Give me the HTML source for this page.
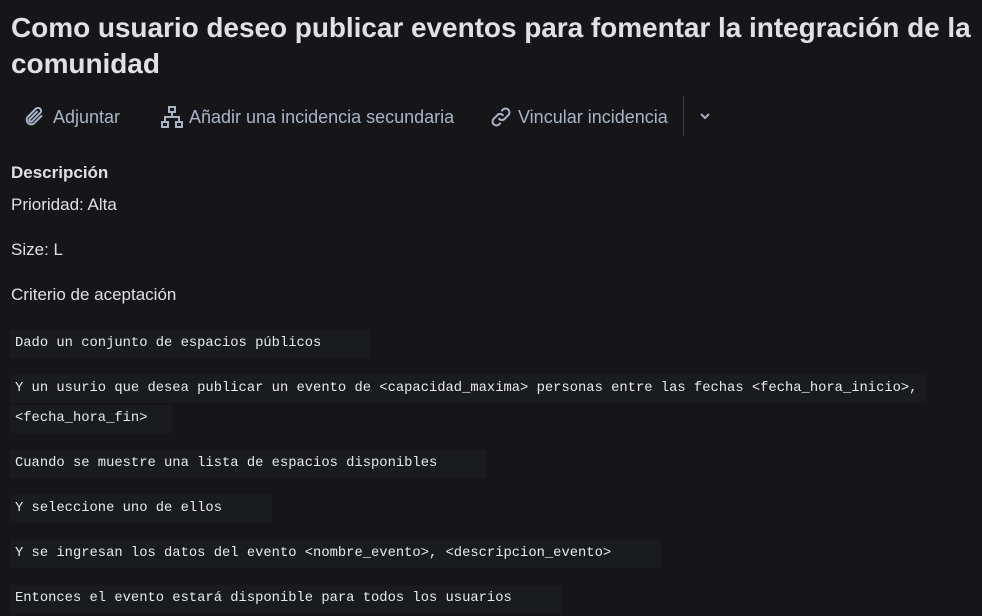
<!DOCTYPE html>
<html><head><meta charset="utf-8"><style>
html,body{margin:0;padding:0;background:#161618;width:982px;height:616px;overflow:hidden;font-family:"Liberation Sans",sans-serif;color:#dee0e4}
.a{position:absolute;white-space:nowrap}
h1{position:absolute;left:11px;top:10px;margin:0;font-size:28px;font-weight:bold;line-height:36px;color:#dfe1e6;white-space:nowrap;letter-spacing:-0.05px}
.tb{color:#a9b4c8;font-size:18px;top:107px}
.c{position:absolute;left:10px;font-family:"Liberation Mono",monospace;font-size:13.8px;color:#e8eaee;background:#1a1b1e;padding:5px 50px 5px 5px;line-height:18px;white-space:nowrap}
.t{font-size:17px}
</style></head><body>
<h1>Como usuario deseo publicar eventos para fomentar la integración de la<br>comunidad</h1>
<svg class="a" style="left:22px;top:106px" width="24" height="22" viewBox="0 0 24 24" fill="none" stroke="#a9b4c8" stroke-width="2.2" stroke-linecap="round"><path d="M20 11l-8 8a5 5 0 0 1-7-7l9-9a3.3 3.3 0 0 1 4.7 4.7l-9 9a1.7 1.7 0 0 1-2.4-2.4l8-8"/></svg>
<div class="a tb" style="left:53px">Adjuntar</div>
<svg class="a" style="left:160px;top:105px" width="24" height="24" viewBox="0 0 24 24" fill="none" stroke="#a9b4c8" stroke-width="2"><rect x="9" y="2" width="6" height="5"/><rect x="2" y="17" width="6" height="5"/><rect x="16" y="17" width="6" height="5"/><path d="M12 7v5M5 17v-5h14v5"/></svg>
<div class="a tb" style="left:189px">Añadir una incidencia secundaria</div>
<svg class="a" style="left:489px;top:106px" width="24" height="22" viewBox="0 0 24 24" fill="none" stroke="#a9b4c8" stroke-width="2.2" stroke-linecap="round"><path d="M10 14a4 4 0 0 0 6 0l4-4a4 4 0 0 0-6-6l-1 1"/><path d="M14 10a4 4 0 0 0-6 0l-4 4a4 4 0 0 0 6 6l1-1"/></svg>
<div class="a tb" style="left:518px">Vincular incidencia</div>
<div class="a" style="left:683px;top:96px;width:1px;height:40px;background:#3a3c42"></div>
<svg class="a" style="left:699px;top:111px" width="12" height="10" viewBox="0 0 12 10" fill="none" stroke="#a9b4c8" stroke-width="2"><path d="M2 3l4 4 4-4"/></svg>
<div class="a t" style="left:11px;top:163px;font-weight:bold">Descripción</div>
<div class="a t" style="left:11px;top:195px">Prioridad: Alta</div>
<div class="a t" style="left:11px;top:240px">Size: L</div>
<div class="a t" style="left:11px;top:285px">Criterio de aceptación</div>
<div class="c" style="top:330px">Dado un conjunto de espacios públicos</div>
<div class="c" style="top:375px;padding-right:10px">Y un usurio que desea publicar un evento de &lt;capacidad_maxima&gt; personas entre las fechas &lt;fecha_hora_inicio&gt;,</div>
<div class="c" style="top:405px;padding-right:25px">&lt;fecha_hora_fin&gt;</div>
<div class="c" style="top:450px">Cuando se muestre una lista de espacios disponibles</div>
<div class="c" style="top:495px">Y seleccione uno de ellos</div>
<div class="c" style="top:540px">Y se ingresan los datos del evento &lt;nombre_evento&gt;, &lt;descripcion_evento&gt;</div>
<div class="c" style="top:585px">Entonces el evento estará disponible para todos los usuarios</div>
</body></html>
